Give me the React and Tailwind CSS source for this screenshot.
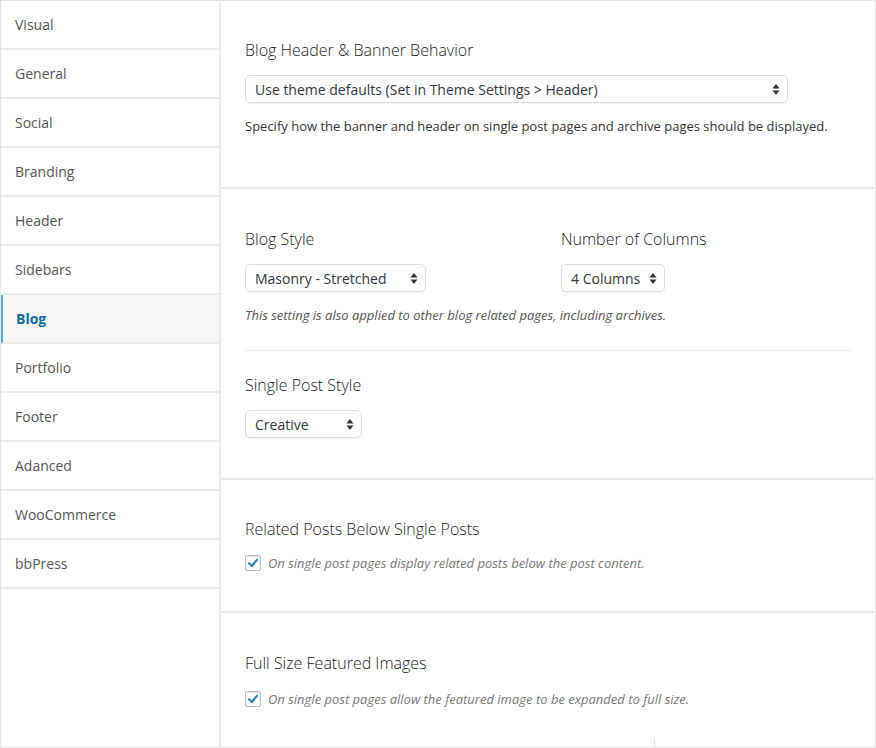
import React from "react";

const font = { fontFamily: '"Open Sans", "Noto Sans", sans-serif' };

const nav = ["Visual","General","Social","Branding","Header","Sidebars","Blog","Portfolio","Footer","Adanced","WooCommerce","bbPress"];

function Arrows() {
  return (
    <svg width="8" height="13" viewBox="0 0 8 13" className="shrink-0">
      <path d="M4 1 L7.5 5.5 L0.5 5.5 Z" fill="#333" />
      <path d="M4 12 L7.5 7.5 L0.5 7.5 Z" fill="#333" />
    </svg>
  );
}

function Select({ label, w }) {
  return (
    <div className={`${w} h-[28px] flex items-center justify-between pl-[9px] pr-[7px] border border-[#dcdcdc] rounded-[5px] bg-white shadow-[0_1px_1px_rgba(0,0,0,0.04)] text-[14px] text-[#32373c]`}>
      <span>{label}</span>
      <Arrows />
    </div>
  );
}

function Check({ text }) {
  return (
    <div className="flex items-center gap-[7px]">
      <div className="w-[16px] h-[16px] border border-[#b4b9be] rounded-[2px] bg-white shadow-[inset_0_1px_2px_rgba(0,0,0,0.1)] flex items-center justify-center">
        <svg width="12" height="12" viewBox="0 0 12 12">
          <path d="M2 6.3 L4.8 9 L10 2.8" stroke="#1e8cbe" strokeWidth="2.2" fill="none" strokeLinecap="round" strokeLinejoin="round" />
        </svg>
      </div>
      <span className="text-[13px] italic text-[#777] leading-[18px]">{text}</span>
    </div>
  );
}

export default function App() {
  return (
    <div style={font} className="w-[876px] h-[748px] flex bg-white border border-[#e3e3e3] overflow-hidden">
      <div className="w-[220px] shrink-0 border-r-2 border-[#e8e8e8] flex flex-col">
        {nav.map((n) => {
          const active = n === "Blog";
          return (
            <div
              key={n}
              className={`h-[49px] shrink-0 border-b-2 border-[#ebebeb] flex items-center text-[14px] ${
                active
                  ? "bg-[#f7f7f7] border-l-2 border-l-[#56a9d4] pl-[13px] font-bold text-[#0e6fa6]"
                  : "pl-[14px] text-[#555]"
              }`}
            >
              {n}
            </div>
          );
        })}
      </div>
      <div className="flex-1 flex flex-col relative">
        <section className="h-[188px] shrink-0 border-b-2 border-[#e8e8e8] pl-[24px] pr-[24px] pt-[38px] flex flex-col">
          <h2 className="text-[16px] leading-[22px] font-light text-[#222]">Blog Header &amp; Banner Behavior</h2>
          <div className="mt-[14px]">
            <Select label="Use theme defaults (Set in Theme Settings > Header)" w="w-[543px]" />
          </div>
          <p className="mt-[14px] text-[13px] leading-[18px] text-[#333]">
            Specify how the banner and header on single post pages and archive pages should be displayed.
          </p>
        </section>
        <section className="h-[291px] shrink-0 border-b-2 border-[#e8e8e8] pl-[24px] pr-[24px] pt-[39px] flex flex-col">
          <div className="flex">
            <div className="w-[316px] flex flex-col">
              <h2 className="text-[16px] leading-[22px] font-light text-[#222]">Blog Style</h2>
              <div className="mt-[14px]">
                <Select label="Masonry - Stretched" w="w-[181px]" />
              </div>
            </div>
            <div className="flex flex-col">
              <h2 className="text-[16px] leading-[22px] font-light text-[#222]">Number of Columns</h2>
              <div className="mt-[14px]">
                <Select label="4 Columns" w="w-[104px]" />
              </div>
            </div>
          </div>
          <p className="mt-[14px] text-[13px] leading-[18px] italic text-[#555]">
            This setting is also applied to other blog related pages, including archives.
          </p>
          <div className="mt-[26px] h-px bg-[#ebebeb]" />
          <h2 className="mt-[23px] text-[16px] leading-[22px] font-light text-[#222]">Single Post Style</h2>
          <div className="mt-[14px]">
            <Select label="Creative" w="w-[117px]" />
          </div>
        </section>
        <section className="h-[133px] shrink-0 border-b-2 border-[#e8e8e8] pl-[24px] pr-[24px] pt-[38px] flex flex-col">
          <h2 className="text-[16px] leading-[22px] font-light text-[#222]">Related Posts Below Single Posts</h2>
          <div className="mt-[14px]">
            <Check text="On single post pages display related posts below the post content." />
          </div>
        </section>
        <section className="flex-1 pl-[24px] pr-[24px] pt-[39px] flex flex-col relative">
          <h2 className="text-[16px] leading-[22px] font-light text-[#222]">Full Size Featured Images</h2>
          <div className="mt-[16px]">
            <Check text="On single post pages allow the featured image to be expanded to full size." />
          </div>
          <div className="absolute left-[433px] bottom-0 w-px h-[8px] bg-[#ddd]" />
        </section>
      </div>
    </div>
  );
}
